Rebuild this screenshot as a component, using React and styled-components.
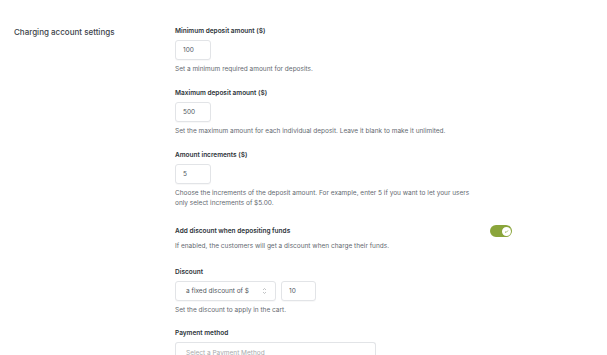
import styled, { createGlobalStyle } from "styled-components";

const GlobalStyle = createGlobalStyle`
	html, body {
		margin: 0;
		padding: 0;
		background: #fff;
		font-family: Inter, "Noto Sans", sans-serif;
		-webkit-font-smoothing: antialiased;
	}
`;

const Page = styled.div`
	display: grid;
	grid-template-columns: 161px 337px;
	padding: 26px 0 0 14px;
	height: 329px;
	overflow: hidden;
`;

const SectionTitle = styled.h2`
	margin: 1px 0 0;
	font-size: 8px;
	line-height: 10px;
	font-weight: 500;
	color: #3c434a;
`;

const Fields = styled.div`
	display: flex;
	flex-direction: column;
`;

const Field = styled.div`
	display: flex;
	flex-direction: column;
	align-items: flex-start;
	margin-bottom: ${p => p.$gap || 14}px;
`;

const Label = styled.label`
	font-size: 6.5px;
	line-height: 10px;
	font-weight: 600;
	color: #2c3338;
	margin-bottom: 4px;
`;

const ToggleRow = styled.div`
	display: flex;
	align-items: center;
	justify-content: space-between;
	align-self: stretch;

	${Label} {
		margin-bottom: 0;
	}
`;

const NumberInput = styled.input`
	box-sizing: border-box;
	width: ${p => p.$width || 36}px;
	height: 20px;
	padding: 0 7px;
	border: 1px solid #e2e4e7;
	border-radius: 3px;
	box-shadow: 0 1px 1px rgba(0, 0, 0, 0.03);
	font-family: inherit;
	font-size: 6.5px;
	color: #50575e;
	background: #fff;
	outline: none;
`;

const Help = styled.p`
	margin: 4px 0 0;
	max-width: 302px;
	font-size: 6.5px;
	line-height: 10px;
	color: #646970;
`;

const InlineControls = styled.div`
	display: flex;
	gap: 5px;
`;

const Select = styled.div`
	box-sizing: border-box;
	width: ${p => p.$width}px;
	height: ${p => p.$height || 20}px;
	padding: 0 8px 0 10px;
	display: flex;
	align-items: ${p => (p.$placeholder ? "flex-end" : "center")};
	justify-content: space-between;
	border: 1px solid #e2e4e7;
	border-bottom: ${p => (p.$placeholder ? "none" : "1px solid #e2e4e7")};
	border-radius: 3px;
	box-shadow: 0 1px 1px rgba(0, 0, 0, 0.03);
	font-size: 6.5px;
	line-height: 10px;
	color: ${p => (p.$placeholder ? "#a7aaad" : "#50575e")};
	background: #fff;
`;

const Toggle = styled.div`
	box-sizing: border-box;
	width: 22px;
	height: 12px;
	border-radius: 6px;
	background: #8aa53b;
	display: flex;
	align-items: center;
	justify-content: flex-end;
	padding: 1.5px;
`;

const Knob = styled.div`
	width: 9px;
	height: 9px;
	border-radius: 50%;
	background: #fff;
	display: flex;
	align-items: center;
	justify-content: center;
`;

const Chevrons = () => (
	<svg width="5" height="8" viewBox="0 0 5 8" fill="none" stroke="#a7aaad" strokeWidth="0.7">
		<path d="M1 3 L2.5 1.5 L4 3" />
		<path d="M1 5 L2.5 6.5 L4 5" />
	</svg>
);

const Check = () => (
	<svg width="5" height="5" viewBox="0 0 5 5" fill="none" stroke="#8aa53b" strokeWidth="0.8">
		<path d="M1 2.6 L2 3.5 L4 1.5" />
	</svg>
);

const App = () => {
	return (
		<>
			<GlobalStyle />
			<Page>
				<SectionTitle>Charging account settings</SectionTitle>
				<Fields>
					<Field>
						<Label>Minimum deposit amount ($)</Label>
						<NumberInput defaultValue="100" />
						<Help>Set a minimum required amount for deposits.</Help>
					</Field>
					<Field>
						<Label>Maximum deposit amount ($)</Label>
						<NumberInput defaultValue="500" />
						<Help>Set the maximum amount for each individual deposit. Leave it blank to make it unlimited.</Help>
					</Field>
					<Field $gap={17}>
						<Label>Amount increments ($)</Label>
						<NumberInput defaultValue="5" />
						<Help>
							Choose the increments of the deposit amount. For example, enter 5 if you want to let your users only select increments of $5.00.
						</Help>
					</Field>
					<Field $gap={16}>
						<ToggleRow>
							<Label>Add discount when depositing funds</Label>
							<Toggle>
								<Knob>
									<Check />
								</Knob>
							</Toggle>
						</ToggleRow>
						<Help>If enabled, the customers will get a discount when charge their funds.</Help>
					</Field>
					<Field $gap={13}>
						<Label>Discount</Label>
						<InlineControls>
							<Select $width={101}>
								<span>a fixed discount of $</span>
								<Chevrons />
							</Select>
							<NumberInput $width={35} defaultValue="10" />
						</InlineControls>
						<Help>Set the discount to apply in the cart.</Help>
					</Field>
					<Field>
						<Label>Payment method</Label>
						<Select $width={201} $height={16} $placeholder>
							<span>Select a Payment Method</span>
						</Select>
					</Field>
				</Fields>
			</Page>
		</>
	);
};

export default App;
